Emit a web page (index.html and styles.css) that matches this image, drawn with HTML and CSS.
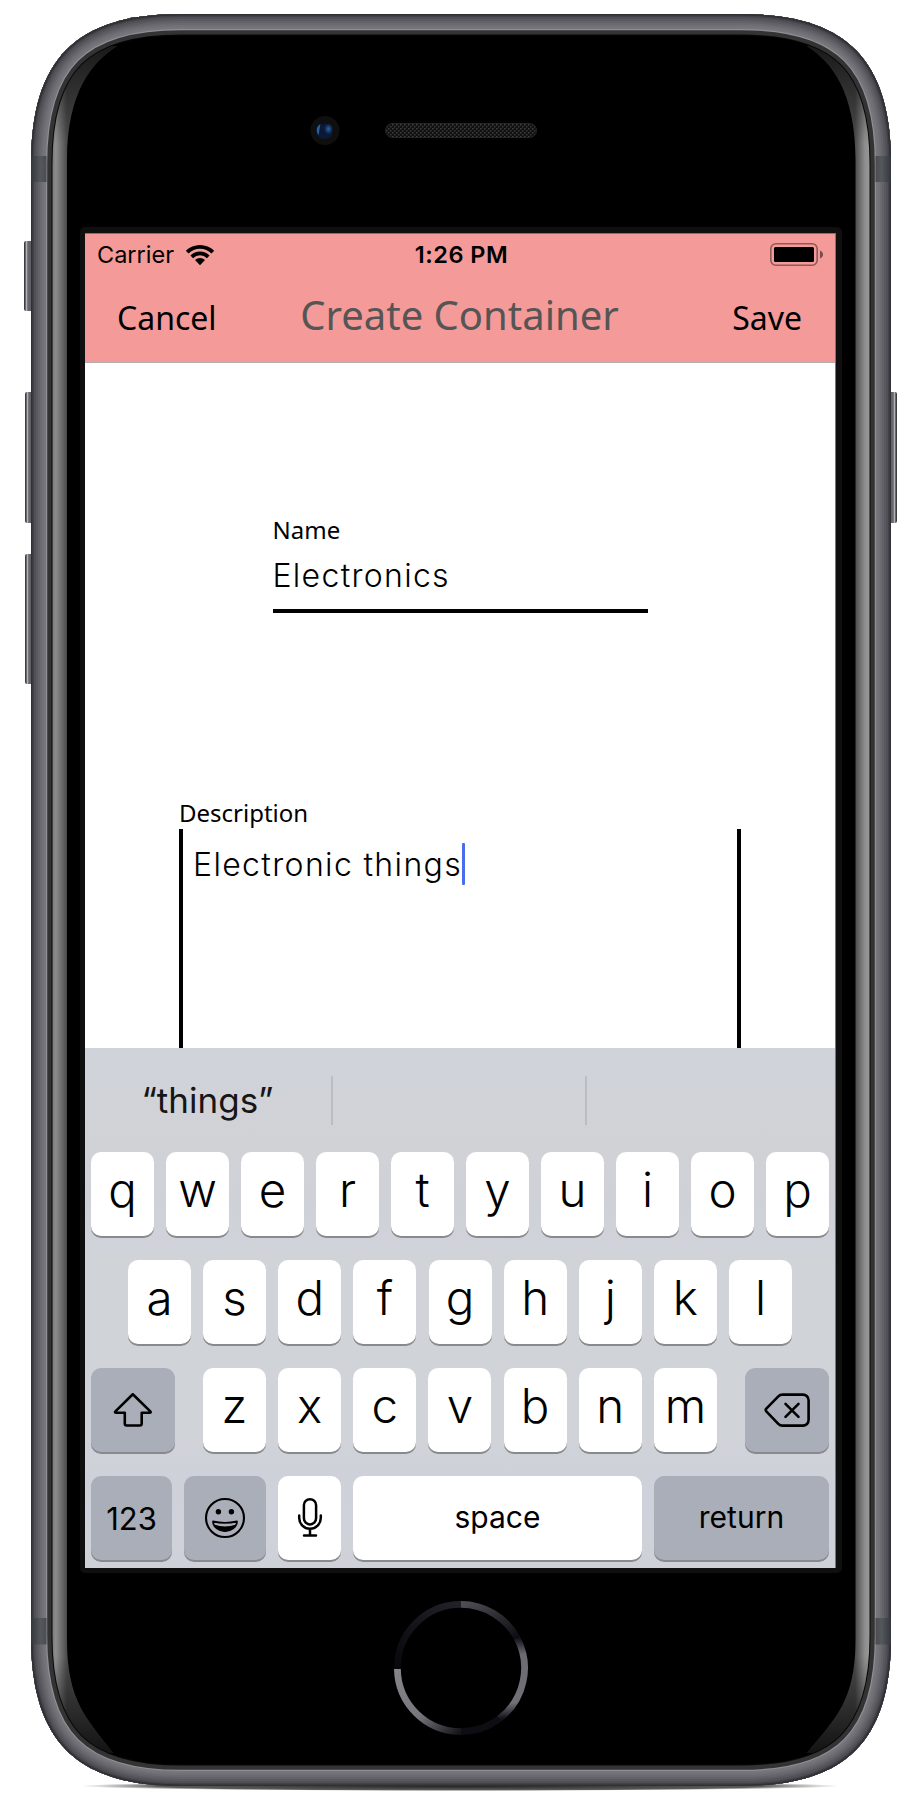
FILE: index.html
```html
<!DOCTYPE html>
<html lang="en">
<head>
<meta charset="utf-8">
<title>Create Container</title>
<link rel="stylesheet" href="styles.css">
</head>
<body>
<main class="phone">
  <svg class="shell" viewBox="0 0 920 1800" width="920" height="1800" aria-hidden="true">
    <defs>
      <path id="body" d="M31 164C31 59 76 14 181 14H741C846 14 891 59 891 164V1636C891 1741 846 1786 741 1786H181C76 1786 31 1741 31 1636Z"/>
      <clipPath id="bodyClip"><use href="#body"/></clipPath>
      <linearGradient id="glassL" gradientUnits="userSpaceOnUse" x1="52" x2="67" y1="0" y2="0">
        <stop offset="0" stop-color="#777"/><stop offset=".25" stop-color="#8d8d8d"/><stop offset="1" stop-color="#4a4a4a"/>
      </linearGradient>
      <linearGradient id="glassR" gradientUnits="userSpaceOnUse" x1="870" x2="855" y1="0" y2="0">
        <stop offset="0" stop-color="#999"/><stop offset=".35" stop-color="#8d8d8d"/><stop offset="1" stop-color="#4a4a4a"/>
      </linearGradient>
      <linearGradient id="fade" gradientUnits="userSpaceOnUse" x1="0" x2="0" y1="40" y2="1760">
        <stop offset="0" stop-opacity=".7"/><stop offset=".06" stop-opacity="0"/><stop offset=".94" stop-opacity="0"/><stop offset="1" stop-opacity=".8"/>
      </linearGradient>
      <linearGradient id="btn" x1="0" x2="1" y1="0" y2="0">
        <stop offset="0" stop-color="#2c2c31"/><stop offset=".14" stop-color="#55555a"/><stop offset=".27" stop-color="#b5b5bb"/><stop offset=".42" stop-color="#69696f"/><stop offset=".8" stop-color="#5b5b60"/><stop offset="1" stop-color="#36363b"/>
      </linearGradient>
      <linearGradient id="band" x1="0" x2="1" y1="0" y2="0">
        <stop offset="0" stop-color="#33363b"/><stop offset=".6" stop-color="#54575c"/><stop offset="1" stop-color="#4b4d51"/>
      </linearGradient>
      <radialGradient id="shadow"><stop offset="0" stop-color="#222"/><stop offset=".8" stop-color="#333" stop-opacity=".8"/><stop offset="1" stop-color="#555" stop-opacity="0"/></radialGradient>
      <radialGradient id="lens" cx=".5" cy=".6" r=".55"><stop offset="0" stop-color="#0a1734"/><stop offset=".7" stop-color="#0b1a38"/><stop offset="1" stop-color="#0a0f1a"/></radialGradient>
      <radialGradient id="glint"><stop offset="0" stop-color="#2b6cb0"/><stop offset="1" stop-color="#123768" stop-opacity=".4"/></radialGradient>
      <pattern id="mesh" width="4" height="4" patternUnits="userSpaceOnUse"><rect width="4" height="4" fill="#101010"/><rect width="1.500" height="1.500" fill="#414141"/><rect x="2" y="2" width="1.500" height="1.500" fill="#393939"/></pattern>
    </defs>
    <ellipse cx="460" cy="1786" rx="380" ry="5" fill="url(#shadow)"/>
    <rect x="24" y="241" width="9" height="70" rx="2" fill="url(#btn)"/>
    <rect x="25" y="392" width="9" height="131" rx="2" fill="url(#btn)"/>
    <rect x="25" y="554" width="9" height="130" rx="2" fill="url(#btn)"/>
    <rect x="25" y="392" width="9" height="131" rx="2" fill="url(#btn)" transform="matrix(-1 0 0 1 922 0)"/>
    <use href="#body" fill="#000"/>
    <g clip-path="url(#bodyClip)">
      <path d="M117 46C92 62 67 92 67 160V1640C67 1700 86 1718 113 1753H31V46Z" fill="url(#glassL)"/>
      <path d="M807 46C832 62 855.500 92 855.500 160V1640C855.500 1700 836 1718 807 1753H891V46Z" fill="url(#glassR)"/>
      <path d="M117 46C92 62 67 92 67 160V1640C67 1700 86 1718 113 1753H31V46ZM807 46C832 62 855.500 92 855.500 160V1640C855.500 1700 836 1718 807 1753H891V46Z" fill="url(#fade)"/>
      <g fill="none">
        <use href="#body" stroke="#080808" stroke-width="43"/>
        <use href="#body" stroke="#333" stroke-width="41"/>
        <use href="#body" stroke="#8f8e94" stroke-width="32.500"/>
        <use href="#body" stroke="#77767c" stroke-width="30"/>
        <use href="#body" stroke="#727177" stroke-width="26"/>
        <use href="#body" stroke="#6b6a70" stroke-width="22"/>
        <use href="#body" stroke="#636268" stroke-width="18"/>
        <use href="#body" stroke="#5a595f" stroke-width="14"/>
        <use href="#body" stroke="#515056" stroke-width="10"/>
        <use href="#body" stroke="#434248" stroke-width="6"/>
        <use href="#body" stroke="#303035" stroke-width="3"/>
      </g>
      <rect x="31" y="156" width="15.500" height="26" fill="url(#band)"/>
      <rect x="31" y="1618" width="15.500" height="26.500" fill="url(#band)"/>
      <rect x="31" y="156" width="15.500" height="26" fill="url(#band)" transform="matrix(-1 0 0 1 922 0)"/>
      <rect x="31" y="1618" width="15.500" height="26.500" fill="url(#band)" transform="matrix(-1 0 0 1 922 0)"/>
    </g>
    <circle cx="325" cy="130.500" r="14.500" fill="#0f0f10"/>
    <circle cx="324.500" cy="130.500" r="8.500" fill="url(#lens)"/>
    <path d="M320.500 124c-4 2-5 7-2 11 1-4 1-7 2-11z" fill="#28609c"/>
    <ellipse cx="328.500" cy="129" rx="4" ry="5" fill="url(#glint)"/>
    <rect x="385.500" y="123.500" width="151" height="14" rx="7" fill="url(#mesh)" stroke="#252525"/>
    <rect x="80" y="227" width="762" height="1346" rx="5" fill="#0f0f0f"/>
    <rect x="85" y="233" width="751" height="1335" fill="#777"/>
  </svg>

  <section class="screen">
    <header class="header">
      <div class="status">
        <div class="carrier">
          <span>Carrier</span>
          <svg width="30" height="22" viewBox="0 0 30 22"><path d="M.8 6.800A20 20 0 0 1 29.200 6.800L26.500 9.500A16.300 16.300 0 0 0 3.500 9.500Z"/><path d="M5.400 11.500A13.600 13.600 0 0 1 24.600 11.500L21.900 14.200A9.800 9.800 0 0 0 8.100 14.200Z"/><path d="M10 16.100A7.200 7.200 0 0 1 20 16.100L15 21.200Z"/></svg>
        </div>
        <span class="time">1:26 PM</span>
        <svg class="battery" width="54" height="23" viewBox="0 0 54 23"><rect x=".8" y=".8" width="46.400" height="21.400" rx="5" fill="none" stroke="#000" stroke-opacity=".42" stroke-width="1.600"/><rect x="4" y="4" width="40" height="15" rx="1.500"/><path d="M50 7.500c4 1.500 4 6.500 0 8z" opacity=".5"/></svg>
      </div>
      <nav class="nav">
        <span class="action">Cancel</span>
        <h1 class="title">Create Container</h1>
        <span class="action action-end">Save</span>
      </nav>
    </header>

    <div class="form">
      <div class="field">
        <div class="label">Name</div>
        <div class="value">Electronics</div>
      </div>
      <div class="field-wide">
        <div class="label">Description</div>
        <div class="textbox"><span class="value-text">Electronic things</span><span class="caret"></span></div>
      </div>
    </div>

    <div class="keyboard">
      <div class="suggestions"><span class="suggestion">“things”</span><span class="suggestion"></span><span class="suggestion"></span></div>
      <div class="row">
        <span class="key">q</span><span class="key">w</span><span class="key">e</span><span class="key">r</span><span class="key">t</span><span class="key">y</span><span class="key">u</span><span class="key">i</span><span class="key">o</span><span class="key">p</span>
      </div>
      <div class="row row-home">
        <span class="key">a</span><span class="key">s</span><span class="key">d</span><span class="key">f</span><span class="key">g</span><span class="key">h</span><span class="key">j</span><span class="key">k</span><span class="key">l</span>
      </div>
      <div class="row">
        <span class="key dark modifier"><svg width="42" height="38" viewBox="0 0 42 38" fill="none" stroke="#000" stroke-width="2.600" stroke-linejoin="round"><path d="M20.800 3.300 38.300 20.400q1.200 1.400-.8 1.400H29.700V32.500q0 2-2 2H14.800q-2 0-2-2V21.800H4.200q-2 0-.8-1.400Z"/></svg></span>
        <span class="letters"><span class="key">z</span><span class="key">x</span><span class="key">c</span><span class="key">v</span><span class="key">b</span><span class="key">n</span><span class="key">m</span></span>
        <span class="key dark modifier"><svg width="48" height="36" viewBox="0 0 48 36" fill="none" stroke="#000" stroke-width="2.600" stroke-linejoin="round" stroke-linecap="round"><path d="M19.500 2.600H40a5.600 5.600 0 0 1 5.600 5.600V28a5.600 5.600 0 0 1-5.600 5.600H19.500q-2.500 0-4.200-1.800L3.300 19.300q-1.200-1.300 0-2.600L15.300 4.400q1.700-1.800 4.200-1.800Z"/><path d="m22.500 11.800 13 13m0-13-13 13"/></svg></span>
      </div>
      <div class="row row-bottom">
        <span class="key dark numbers">123</span>
        <span class="key dark emoji"><svg width="42" height="42" viewBox="-21 -21 42 42"><circle r="19" fill="none" stroke="#000" stroke-width="2.100"/><circle cx="-6.600" cy="-6.300" r="2.700"/><circle cx="6.400" cy="-6.300" r="2.700"/><path d="M-12 3.400Q0 6.400 12 3.400C12 9 6 13.200 0 13.200S-12 9-12 3.400Z" fill="none" stroke="#000" stroke-width="1.700" stroke-linejoin="round"/><path d="M-11 6.500Q0 10.500 11 6.500C9 11.500 4 13.500 0 13.500S-9 11.500-11 6.500Z"/></svg></span>
        <span class="key mic"><svg width="28" height="42" viewBox="0 0 28 42" fill="none" stroke="#000" stroke-width="2.500" stroke-linecap="round"><rect x="7.900" y="2.200" width="12.200" height="25.200" rx="6.100"/><path d="M3.200 18.500v2.500a10.800 10.800 0 0 0 21.600 0v-2.500M14 32v6M8 38.600h12"/></svg></span>
        <span class="key space">space</span>
        <span class="key dark return">return</span>
      </div>
    </div>
  </section>

  <svg class="home" width="136" height="136" viewBox="-68 -68 136 136" aria-hidden="true">
    <defs>
      <linearGradient id="h1" x1="0" x2="1" y1="0" y2="1"><stop offset="0" stop-color="#4e4e54"/><stop offset="1" stop-color="#0c0c12"/></linearGradient>
      <linearGradient id="h2" x1="0" x2="0" y1="0" y2="1"><stop offset="0" stop-color="#111118"/><stop offset=".2" stop-color="#6c6b72"/><stop offset=".8" stop-color="#717077"/><stop offset="1" stop-color="#101016"/></linearGradient>
      <linearGradient id="h3" x1="1" x2="0" y1="1" y2="0"><stop offset="0" stop-color="#131318"/><stop offset=".45" stop-color="#77767c"/><stop offset="1" stop-color="#85848a"/></linearGradient>
      <linearGradient id="h4" x1="0" x2="1" y1="1" y2="0"><stop offset="0" stop-color="#07070c"/><stop offset="1" stop-color="#222228"/></linearGradient>
    </defs>
    <g fill="none" stroke-width="6.800">
      <path d="M0-63.600A63.600 63.600 0 0 1 56-30" stroke="url(#h1)"/>
      <path d="M56-30A63.600 63.600 0 0 1 38 51" stroke="url(#h2)"/>
      <path d="M38 51A63.600 63.600 0 0 1 0 63.600" stroke="#0d0d13"/>
      <path d="M0 63.600A63.600 63.600 0 0 1-63.600 1" stroke="url(#h3)"/>
      <path d="M-63.600 1A63.600 63.600 0 0 1 0-63.600" stroke="url(#h4)"/>
    </g>
  </svg>
</main>
</body>
</html>
```
FILE: styles.css
```css
* { box-sizing: border-box; }

body {
  margin: 0;
  background: #fff;
  color: #000;
  font-family: Inter, "Liberation Sans", sans-serif;
}

.phone {
  position: relative;
  display: flex;
  flex-direction: column;
  align-items: center;
  width: 920px;
  height: 1800px;
  padding-top: 234px;
  overflow: hidden;
}

.shell {
  position: absolute;
  inset: 0;
}

.screen {
  position: relative;
  display: flex;
  flex-direction: column;
  width: 750px;
  height: 1334px;
  background: #fff;
}

.home {
  position: relative;
  margin-top: 32px;
  margin-left: 2px;
}

.header {
  height: 129px;
  background: #f49a98;
  border-bottom: 1px solid #b5adad;
}

.status {
  display: grid;
  grid-template-columns: 1fr auto 1fr;
  align-items: center;
  height: 41px;
  padding: 0 11px 0 12px;
  font-size: 23.5px;
}

.carrier {
  display: flex;
  align-items: center;
  gap: 11px;
}

.time {
  padding-left: 2px;
  font-weight: 600;
  letter-spacing: .5px;
}

.battery { justify-self: end; }

.nav {
  display: grid;
  grid-template-columns: 1fr auto 1fr;
  align-items: baseline;
  padding: 16px 33px 0 32px;
  font-family: "Noto Sans", sans-serif;
}

.action {
  font-size: 32px;
  line-height: 40px;
}

.action-end { text-align: right; }

.title {
  margin: 0;
  font-size: 40px;
  font-weight: 400;
  line-height: 48px;
  color: #555;
}

.form {
  display: flex;
  flex: 1;
  flex-direction: column;
  align-items: center;
  padding-top: 151px;
}

.field { width: 375px; }

.field-wide {
  display: flex;
  flex: 1;
  flex-direction: column;
  width: 562px;
  margin-top: 184px;
}

.label {
  font-family: "Noto Sans", sans-serif;
  font-size: 24px;
  line-height: 32px;
}

.value {
  margin-top: 10px;
  padding-bottom: 13px;
  border-bottom: 4px solid #000;
  font-size: 32px;
  font-weight: 320;
  line-height: 40px;
  letter-spacing: 1.3px;
}

.textbox {
  display: flex;
  flex: 1;
  align-items: flex-start;
  padding: 14px 10px 0;
  border: solid #000;
  border-width: 0 4px;
}

.value-text {
  margin-top: 2px;
  font-size: 32px;
  font-weight: 320;
  line-height: 40px;
  letter-spacing: 1.35px;
}

.caret {
  width: 3px;
  height: 42px;
  border-radius: 1px;
  background: #4a6df0;
}

.keyboard {
  display: flex;
  flex-direction: column;
  gap: 24px;
  height: 520px;
  padding: 0 6px;
  background: linear-gradient(#cfd3da, #d1d2d6 18%, #cfd1d8 30%, #d0d4d8 45%, #d0d3d8 75%, #cfd1da 82%, #ced2d8);
}

.suggestions {
  display: grid;
  grid-template-columns: 242px 254px 1fr;
  height: 80px;
  padding-top: 28px;
}

.suggestion {
  height: 49px;
  border-right: 2px solid #bbbdc2;
  color: #161616;
  font-size: 35px;
  line-height: 49px;
  text-align: center;
}

.suggestion:first-child { padding-right: 7px; }
.suggestion:last-child { border: 0; }

.row {
  display: flex;
  justify-content: space-between;
}

.row-home { padding: 0 37px; }

.row-bottom { gap: 12px; }

.letters {
  display: flex;
  justify-content: space-between;
  width: 514px;
}

.key {
  display: flex;
  align-items: center;
  justify-content: center;
  width: 63px;
  height: 84px;
  padding-bottom: 9px;
  border-radius: 10px;
  background: #fff;
  box-shadow: 0 2px 0 #898a8d;
  font-size: 47.5px;
  font-weight: 350;
}

.dark { background: #aaaeb9; }

.modifier { width: 84px; padding-bottom: 0; }

.numbers {
  width: 81px;
  padding: 1px 0 0;
  font-size: 31px;
  font-weight: 400;
}

.emoji { width: 82px; padding: 0; }

.mic { padding: 0; }

.space, .return {
  padding-bottom: 2px;
  font-size: 30px;
  font-weight: 400;
}

.space { flex: 1; }
.return { width: 175px; }
```
